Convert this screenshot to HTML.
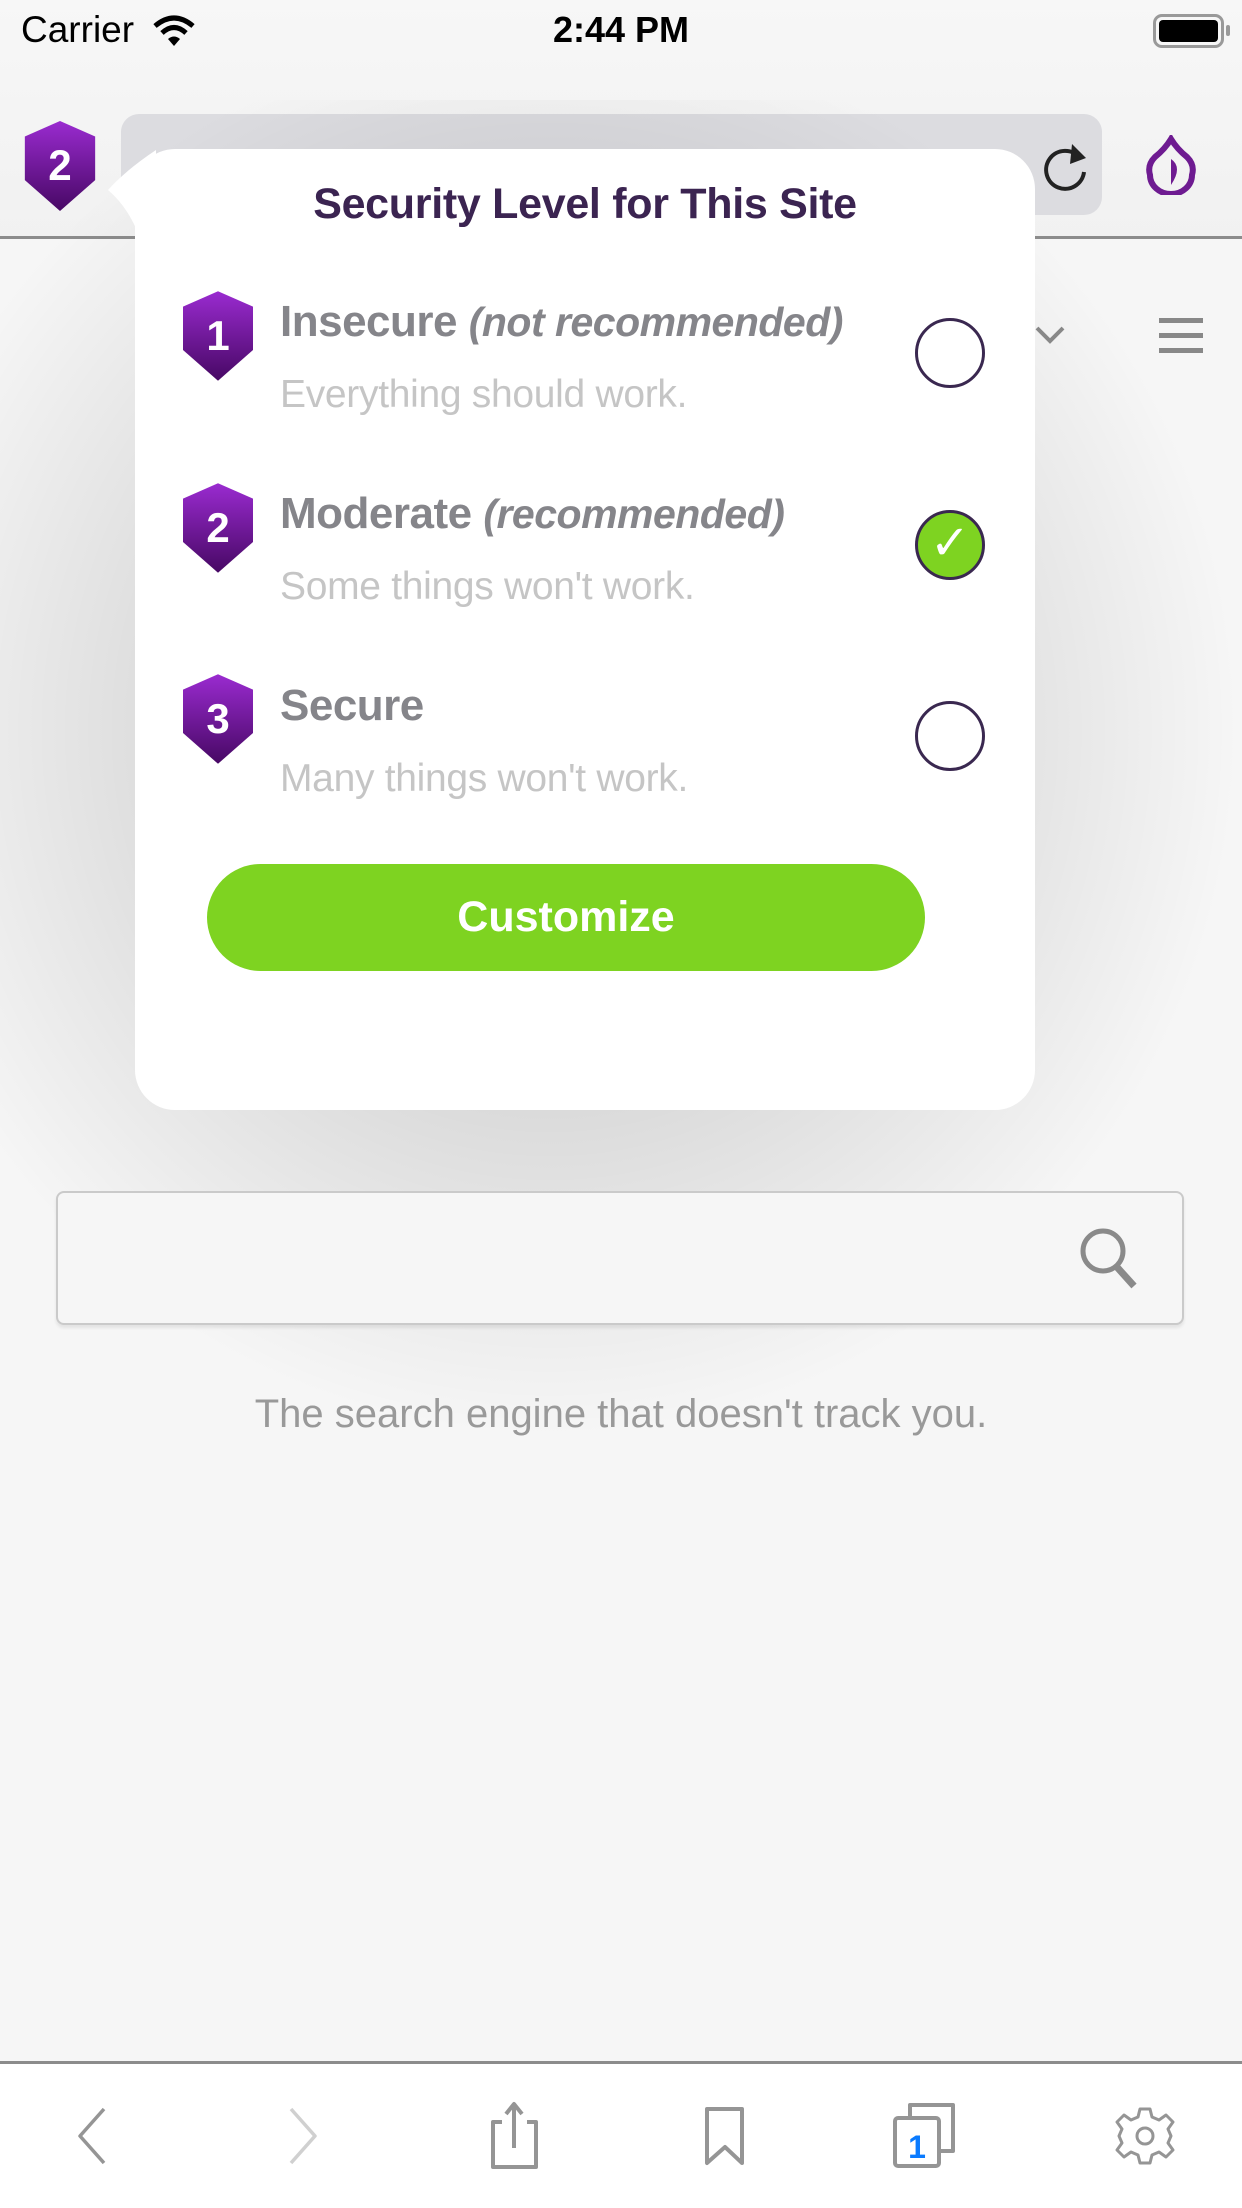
<!DOCTYPE html>
<html><head><meta charset="utf-8"><style>
*{margin:0;padding:0;box-sizing:border-box}
body{width:1242px;height:2208px;position:relative;overflow:hidden;background:#f5f5f5;font-family:"Liberation Sans",sans-serif}
.abs{position:absolute}
.title{font-weight:bold;color:#85858a;font-size:44px;letter-spacing:-0.5px;white-space:nowrap}
.title i{font-size:41px}
.sub{color:#c5c5c5;font-size:39px;letter-spacing:-0.3px;white-space:nowrap}
.radio{width:70px;height:70px;border-radius:50%;border:3px solid #3a2850}
</style></head><body>
<svg width="0" height="0" style="position:absolute"><defs><linearGradient id="g" x1="0" y1="0" x2="0" y2="1"><stop offset="0" stop-color="#9a2bd0"/><stop offset="1" stop-color="#470864"/></linearGradient></defs></svg>
<div class="abs" style="left:0;top:0;width:1242px;height:238px;background:linear-gradient(#f7f7f7,#f1f1f1)"></div>
<div class="abs" style="left:21px;top:9px;font-size:37px;color:#000">Carrier</div>
<svg class="abs" style="left:152px;top:14px" width="44" height="34" viewBox="0 0 44 34"><path d="M22 32 L16 25 Q22 20 28 25Z" fill="#000"/><path d="M10 19 Q22 8 34 19" stroke="#000" stroke-width="5" fill="none"/><path d="M3 12 Q22 -4 41 12" stroke="#000" stroke-width="5" fill="none"/></svg>
<div class="abs" style="left:0;width:1242px;text-align:center;top:9px;font-size:36px;font-weight:bold;color:#000">2:44 PM</div>
<div class="abs" style="left:1153px;top:14px;width:71px;height:34px;border:3px solid #999;border-radius:9px;padding:3px"><div style="width:100%;height:100%;background:#000;border-radius:4px"></div></div>
<div class="abs" style="left:1226px;top:25px;width:4px;height:11px;background:#999;border-radius:2px"></div>
<svg class="abs" style="left:24px;top:121px" width="72" height="90" viewBox="0 0 50 64"><path d="M25 0 L50 11 V42 L25 64 L0 42 V11 Z" fill="url(#g)"/><text x="25" y="42" text-anchor="middle" font-family="Liberation Sans" font-weight="bold" font-size="30" fill="#fff">2</text></svg>
<div class="abs" style="left:121px;top:114px;width:981px;height:101px;background:#dcdce0;border-radius:18px"></div>
<svg class="abs" style="left:1040px;top:138px" width="54" height="56" viewBox="0 0 54 56"><path d="M40 20 A19 19 0 1 0 44 34" stroke="#222" stroke-width="4" fill="none"/><path d="M32 6 L46 20 L30 26Z" fill="#222"/></svg>
<svg class="abs" style="left:1143px;top:135px" width="56" height="60" viewBox="0 0 56 60"><path d="M28 4 Q34 14 44 22 Q52 30 49 40 A21 19 0 0 1 7 40 Q4 30 12 22 Q22 14 28 4Z" stroke="#6e1b91" stroke-width="6" fill="none"/><path d="M28 24 Q40 32 28 50Z" fill="#6e1b91"/></svg>
<div class="abs" style="left:0;top:236px;width:1242px;height:3px;background:#8c8c8c"></div>
<div class="abs" style="left:0;top:239px;width:1242px;height:1824px;background:#f6f6f6"></div>
<div class="abs" style="left:-200px;top:100px;width:1500px;height:1400px;background:radial-gradient(ellipse at 50% 45%,rgba(0,0,0,.13) 30%,rgba(0,0,0,0) 65%)"></div>
<svg class="abs" style="left:1034px;top:325px" width="32" height="20" viewBox="0 0 32 20"><path d="M3 3 L16 16 L29 3" stroke="#888" stroke-width="4" fill="none"/></svg>
<div class="abs" style="left:1159px;top:318px;width:44px;height:5px;background:#888;box-shadow:0 15px 0 #888,0 30px 0 #888"></div>
<div class="abs" style="left:56px;top:1191px;width:1128px;height:134px;border:2px solid #cacaca;border-radius:8px;background:#f6f6f6;box-shadow:0 3px 3px rgba(0,0,0,.08)"></div>
<svg class="abs" style="left:1076px;top:1224px" width="66" height="66" viewBox="0 0 66 66"><circle cx="27" cy="27" r="20" stroke="#8a8a8a" stroke-width="5" fill="none"/><path d="M40 42 L58 62" stroke="#8a8a8a" stroke-width="7"/></svg>
<div class="abs" style="left:0;width:1242px;top:1392px;text-align:center;font-size:40px;color:#999;white-space:nowrap">The search engine that doesn't track you.</div>
<svg class="abs" style="left:96px;top:150px" width="60" height="110" viewBox="0 0 60 110"><path d="M60 0 L60 110 L48 100 Q36 60 12 40 Q30 20 60 0Z" fill="#fff"/></svg>
<div class="abs" style="left:135px;top:149px;width:900px;height:961px;background:#fff;border-radius:40px"></div>
<div class="abs" style="left:135px;width:900px;top:180px;text-align:center;font-size:43px;font-weight:bold;color:#3b2451;letter-spacing:-0.3px">Security Level for This Site</div>
<svg class="abs" style="left:183px;top:291px" width="70" height="90" viewBox="0 0 50 64"><path d="M25 0 L50 11 V42 L25 64 L0 42 V11 Z" fill="url(#g)"/><text x="25" y="42" text-anchor="middle" font-family="Liberation Sans" font-weight="bold" font-size="30" fill="#fff">1</text></svg>
<svg class="abs" style="left:183px;top:483px" width="70" height="90" viewBox="0 0 50 64"><path d="M25 0 L50 11 V42 L25 64 L0 42 V11 Z" fill="url(#g)"/><text x="25" y="42" text-anchor="middle" font-family="Liberation Sans" font-weight="bold" font-size="30" fill="#fff">2</text></svg>
<svg class="abs" style="left:183px;top:674px" width="70" height="90" viewBox="0 0 50 64"><path d="M25 0 L50 11 V42 L25 64 L0 42 V11 Z" fill="url(#g)"/><text x="25" y="42" text-anchor="middle" font-family="Liberation Sans" font-weight="bold" font-size="30" fill="#fff">3</text></svg>
<div class="abs title" style="left:280px;top:297px">Insecure <i>(not recommended)</i></div>
<div class="abs sub" style="left:280px;top:373px">Everything should work.</div>
<div class="abs title" style="left:280px;top:489px">Moderate <i>(recommended)</i></div>
<div class="abs sub" style="left:280px;top:565px">Some things won't work.</div>
<div class="abs title" style="left:280px;top:681px">Secure</div>
<div class="abs sub" style="left:280px;top:757px">Many things won't work.</div>
<div class="abs radio" style="left:915px;top:318px"></div>
<div class="abs radio" style="left:915px;top:510px;background:#7ed321;color:#fff;font-size:48px;text-align:center;line-height:62px">✓</div>
<div class="abs radio" style="left:915px;top:701px"></div>
<div class="abs" style="left:207px;top:864px;width:718px;height:107px;border-radius:54px;background:#7ed321;color:#fff;font-size:43px;font-weight:bold;text-align:center;line-height:107px">Customize</div>
<div class="abs" style="left:0;top:2061px;width:1242px;height:3px;background:#8c8c8c"></div>
<div class="abs" style="left:0;top:2064px;width:1242px;height:144px;background:#fff"></div>
<svg class="abs" style="left:0;top:2090px" width="1242" height="100" viewBox="0 0 1242 100">
<g stroke="#959595" stroke-width="4" fill="none" stroke-linejoin="round">
<path d="M104 19 L80 46 L104 73" stroke-width="3.5"/>
<path d="M291 19 L315 46 L291 73" stroke="#d0d0d0" stroke-width="3.5"/>
<path d="M502 32 H493 V77 H536 V32 H527"/>
<path d="M514 58 V16 M506 24 L514 14 L522 24"/>
<path d="M707 19 H742 V73 L725 57 L707 73Z"/>
<rect x="895" y="28" width="44" height="48" rx="3"/>
<path d="M910 28 V15 H953 V61 H939"/>
<circle cx="1145" cy="46" r="8" stroke-width="3"/>
<path d="M1140 19 H1150 L1152 27 L1159 30 L1166 25 L1173 32 L1168 39 L1171 46 L1168 53 L1173 60 L1166 67 L1159 62 L1152 65 L1150 73 H1140 L1138 65 L1131 62 L1124 67 L1117 60 L1122 53 L1119 46 L1122 39 L1117 32 L1124 25 L1131 30 L1138 27Z" stroke-width="3"/>
</g>
<text x="917" y="68" text-anchor="middle" font-family="Liberation Sans" font-weight="bold" font-size="32" fill="#0a7bff">1</text>
</svg>
</body></html>
